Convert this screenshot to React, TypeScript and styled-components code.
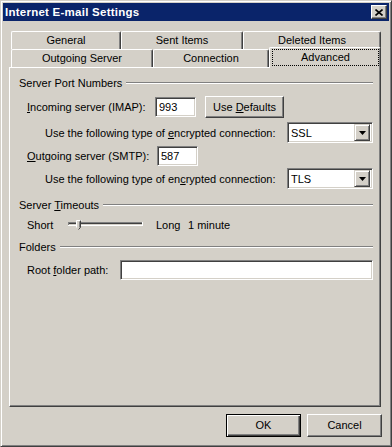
import React from 'react'
import styled, {createGlobalStyle} from 'styled-components'

const GlobalStyle = createGlobalStyle`
  html, body {
    margin: 0;
    padding: 0;
    background: #D4D0C8;
  }
  body {
    font-family: 'Liberation Sans', Arial, sans-serif;
    font-size: 11px;
    color: #000000;
  }
`

const Window = styled.div`
  box-sizing: border-box;
  width: 392px;
  height: 447px;
  background: #D4D0C8;
  border: 1px solid;
  border-color: #D4D0C8 #404040 #404040 #D4D0C8;
  box-shadow: inset 1px 1px #FFFFFF, inset -1px -1px #808080;
  padding: 2px;
  display: flex;
  flex-direction: column;
`

const TitleBar = styled.div`
  height: 18px;
  background: #0A246A;
  display: flex;
  align-items: center;
  padding: 0 2px;
`

const Title = styled.span`
  flex: 1;
  color: #FFFFFF;
  font-weight: bold;
  font-size: 11.5px;
  letter-spacing: 0.25px;
`

const CloseButton = styled.div`
  box-sizing: border-box;
  width: 16px;
  height: 14px;
  background: #D4D0C8;
  border: 1px solid;
  border-color: #FFFFFF #404040 #404040 #FFFFFF;
  box-shadow: inset -1px -1px #808080;
  display: flex;
  align-items: center;
  justify-content: center;
`

const Body = styled.div`
  flex: 1;
  display: flex;
  flex-direction: column;
  padding: 10px 8px 0 6px;
`

const TabStrip = styled.div`
  display: flex;
  flex-direction: column;
  margin-left: 2px;
  width: 370px;
`

const TabRow = styled.div`
  display: flex;
  height: 18px;
  align-items: flex-start;
`

const Tab = styled.div<{ $w: number; $selected?: boolean }>`
  box-sizing: border-box;
  width: ${p => p.$w}px;
  height: ${p => (p.$selected ? 21 : 18)}px;
  margin-top: ${p => (p.$selected ? -2 : 0)}px;
  position: relative;
  z-index: ${p => (p.$selected ? 2 : 0)};
  background: #D4D0C8;
  border-top: 1px solid #FFFFFF;
  border-left: 1px solid #FFFFFF;
  border-right: 1px solid #404040;
  border-top-left-radius: 2px;
  border-top-right-radius: 2px;
  box-shadow: inset -1px 0 #808080;
  display: flex;
  align-items: ${p => (p.$selected ? 'stretch' : 'center')};
  justify-content: center;
  padding: ${p => (p.$selected ? '1px 1px 2px 2px' : '0 0 1px 0')};
`

const FocusLabel = styled.div`
  flex: 1;
  border: 1px dotted #000000;
  display: flex;
  align-items: center;
  justify-content: center;
  padding-bottom: 1px;
`

const Panel = styled.div`
  box-sizing: border-box;
  height: 340px;
  background: #D4D0C8;
  border: 1px solid;
  border-color: #FFFFFF #404040 #404040 #FFFFFF;
  box-shadow: inset -1px -1px #808080;
  padding: 8px 7px 0 9px;
  display: flex;
  flex-direction: column;
`

const GroupHeader = styled.div<{ $mt: number }>`
  display: flex;
  align-items: center;
  height: 14px;
  margin-top: ${p => p.$mt}px;
`

const GroupLine = styled.div`
  flex: 1;
  margin-left: 4px;
  height: 0;
  border-top: 1px solid #808080;
  border-bottom: 1px solid #FFFFFF;
`

const Row = styled.div<{ $mt: number; $h: number; $indent: number }>`
  display: flex;
  align-items: center;
  height: ${p => p.$h}px;
  margin-top: ${p => p.$mt}px;
  padding-left: ${p => p.$indent}px;
`

const Label = styled.span<{ $w?: number; $ml?: number }>`
  white-space: nowrap;
  margin-left: ${p => p.$ml || 0}px;
  ${p => (p.$w ? `width: ${p.$w}px; flex: none;` : '')}
`

const TextBox = styled.div<{ $w?: number }>`
  box-sizing: border-box;
  height: 20px;
  ${p => (p.$w ? `width: ${p.$w}px;` : 'flex: 1;')}
  background: #FFFFFF;
  border: 1px solid;
  border-color: #808080 #FFFFFF #FFFFFF #808080;
  box-shadow: inset 1px 1px #404040, inset -1px -1px #D4D0C8;
  padding: 0 3px;
  display: flex;
  align-items: center;
`

const Button = styled.div<{ $w: number; $h: number; $ml?: number; $default?: boolean }>`
  box-sizing: border-box;
  width: ${p => p.$w}px;
  height: ${p => p.$h}px;
  margin-left: ${p => p.$ml || 0}px;
  background: #D4D0C8;
  border: 1px solid;
  border-color: ${p => (p.$default ? '#000000' : '#FFFFFF #404040 #404040 #FFFFFF')};
  box-shadow: ${p =>
    p.$default
      ? 'inset 1px 1px #FFFFFF, inset -1px -1px #404040, inset -2px -2px #808080'
      : 'inset -1px -1px #808080'};
  display: flex;
  align-items: center;
  justify-content: center;
  padding-bottom: 1px;
`

const Select = styled.div`
  box-sizing: border-box;
  width: 86px;
  height: 21px;
  margin-left: auto;
  background: #FFFFFF;
  border: 1px solid;
  border-color: #808080 #FFFFFF #FFFFFF #808080;
  box-shadow: inset 1px 1px #404040, inset -1px -1px #D4D0C8;
  padding: 2px 2px 2px 3px;
  display: flex;
  align-items: center;
`

const SelectValue = styled.span`
  flex: 1;
`

const DropButton = styled.div`
  box-sizing: border-box;
  width: 16px;
  height: 17px;
  background: #D4D0C8;
  border: 1px solid;
  border-color: #D4D0C8 #404040 #404040 #D4D0C8;
  box-shadow: inset 1px 1px #FFFFFF, inset -1px -1px #808080;
  display: flex;
  align-items: center;
  justify-content: center;
`

const SliderWrap = styled.div`
  width: 76px;
  height: 12px;
  flex: none;
`

const ButtonRow = styled.div`
  display: flex;
  justify-content: flex-end;
  gap: 6px;
  margin-top: 7px;
  margin-right: -1px;
`

const U: React.FC<{ children: React.ReactNode }> = ({children}) => (
  <span style={{textDecoration: 'underline'}}>{children}</span>
)

const Arrow = () => (
  <svg width="7" height="4" viewBox="0 0 7 4">
    <path d="M0 0H7L3.5 4Z" fill="#000"/>
  </svg>
)

const Slider = () => (
  <SliderWrap>
    <svg width="76" height="12" viewBox="0 0 76 12">
      <rect x="0" y="3" width="75" height="1" fill="#808080"/>
      <rect x="0" y="3" width="1" height="4" fill="#808080"/>
      <rect x="1" y="4" width="73" height="1" fill="#404040"/>
      <rect x="1" y="5" width="73" height="1" fill="#D4D0C8"/>
      <rect x="0" y="6" width="75" height="1" fill="#FFFFFF"/>
      <rect x="74" y="3" width="1" height="4" fill="#FFFFFF"/>
      <path d="M8 1H13V8L10.5 10.5L8 8Z" fill="#D4D0C8"/>
      <path d="M8 8V1H13" stroke="#FFFFFF" fill="none" strokeWidth="1" transform="translate(0.5 0.5)"/>
      <path d="M12 1V8L10 10" stroke="#404040" fill="none" strokeWidth="1" transform="translate(0.5 0.5)"/>
      <path d="M11 2V8" stroke="#808080" fill="none" strokeWidth="1" transform="translate(0.5 0.5)"/>
    </svg>
  </SliderWrap>
)

const App: React.FC = () => {
  return (
    <>
      <GlobalStyle/>
      <Window>
        <TitleBar>
          <Title>Internet E-mail Settings</Title>
          <CloseButton>
            <svg width="8" height="7" viewBox="0 0 8 7">
              <path d="M0.5 0.5L7.5 6.5M7.5 0.5L0.5 6.5" stroke="#000" strokeWidth="1.6"/>
            </svg>
          </CloseButton>
        </TitleBar>

        <Body>
          <TabStrip>
            <TabRow>
              <Tab $w={110}>General</Tab>
              <Tab $w={122}>Sent Items</Tab>
              <Tab $w={138}>Deleted Items</Tab>
            </TabRow>
            <TabRow>
              <Tab $w={142}>Outgoing Server</Tab>
              <Tab $w={116}>Connection</Tab>
              <Tab $w={112} $selected>
                <FocusLabel>Advanced</FocusLabel>
              </Tab>
            </TabRow>
          </TabStrip>

          <Panel>
            <GroupHeader $mt={0}>
              <Label>Server Port Numbers</Label>
              <GroupLine/>
            </GroupHeader>

            <Row $mt={6} $h={22} $indent={8}>
              <Label $w={128}><U>I</U>ncoming server (IMAP):</Label>
              <TextBox $w={41}>993</TextBox>
              <Button $w={79} $h={22} $ml={9}>
                <span>Use <U>D</U>efaults</span>
              </Button>
            </Row>

            <Row $mt={4} $h={21} $indent={26}>
              <Label>Use the following type of <U>e</U>ncrypted connection:</Label>
              <Select>
                <SelectValue>SSL</SelectValue>
                <DropButton><Arrow/></DropButton>
              </Select>
            </Row>

            <Row $mt={3} $h={20} $indent={8}>
              <Label $w={130}><U>O</U>utgoing server (SMTP):</Label>
              <TextBox $w={41}>587</TextBox>
            </Row>

            <Row $mt={2} $h={21} $indent={26}>
              <Label>Use the following type of en<U>c</U>rypted connection:</Label>
              <Select>
                <SelectValue>TLS</SelectValue>
                <DropButton><Arrow/></DropButton>
              </Select>
            </Row>

            <GroupHeader $mt={9}>
              <Label>Server <U>T</U>imeouts</Label>
              <GroupLine/>
            </GroupHeader>

            <Row $mt={3} $h={20} $indent={8}>
              <Label $w={41}>Short</Label>
              <Slider/>
              <Label $w={32} $ml={12}>Long</Label>
              <Label>1 minute</Label>
            </Row>

            <GroupHeader $mt={5}>
              <Label>Folders</Label>
              <GroupLine/>
            </GroupHeader>

            <Row $mt={6} $h={20} $indent={8}>
              <Label $w={93}>Root <U>f</U>older path:</Label>
              <TextBox/>
            </Row>
          </Panel>

          <ButtonRow>
            <Button $w={75} $h={23} $default>OK</Button>
            <Button $w={75} $h={23}>Cancel</Button>
          </ButtonRow>
        </Body>
      </Window>
    </>
  )
}

export default App
